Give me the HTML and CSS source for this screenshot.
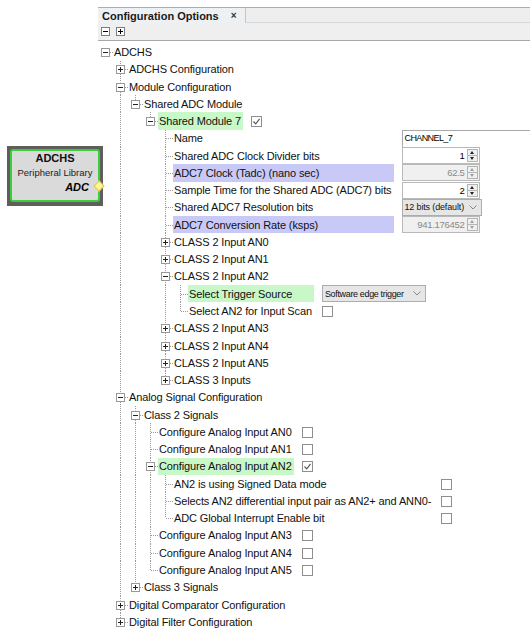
FILE: index.html
```html
<!DOCTYPE html>
<html>
<head>
<meta charset="utf-8">
<title>Configuration Options</title>
<link rel="stylesheet" href="styles.css">
</head>
<body>
<div class="page">
  <div class="canvas">
    <div class="adc-node">
      <div class="adc-card">
        <div class="adc-title">ADCHS</div>
        <div class="adc-sub">Peripheral Library</div>
        <div class="adc-port">ADC</div>
      </div>
      <span class="adc-pin"></span>
    </div>
  </div>

  <section class="panel">
    <div class="tabbar">
      <div class="tab">Configuration Options <span class="tab-x">×</span></div>
    </div>
    <div class="toolbar">
      <span class="tb-btn minus"></span>
      <span class="tb-btn plus"></span>
    </div>

    <div class="tree">
      <div class="grp">
        <div class="row"><span class="gut"><i class="g r minus"></i></span><span class="lbl">ADCHS</span><span class="ed"></span></div>
        <div class="grp">
          <div class="row"><span class="gut"><i class="g"></i><i class="g t plus"></i></span><span class="lbl">ADCHS Configuration</span><span class="ed"></span></div>
          <div class="row"><span class="gut"><i class="g"></i><i class="g t minus"></i></span><span class="lbl">Module Configuration</span><span class="ed"></span></div>
          <div class="grp">
            <div class="row"><span class="gut"><i class="g"></i><i class="g v"></i><i class="g l minus"></i></span><span class="lbl">Shared ADC Module</span><span class="ed"></span></div>
            <div class="grp">
              <div class="row"><span class="gut"><i class="g"></i><i class="g v"></i><i class="g"></i><i class="g l minus"></i></span><span class="lbl hl-green">Shared Module 7</span><span class="ed"><span class="cb on"></span></span></div>
              <div class="grp">
                <div class="row"><span class="gut"><i class="g"></i><i class="g v"></i><i class="g"></i><i class="g"></i><i class="g t"></i></span><span class="lbl">Name</span><span class="ed"><span class="field">CHANNEL_7</span></span></div>
                <div class="row"><span class="gut"><i class="g"></i><i class="g v"></i><i class="g"></i><i class="g"></i><i class="g t"></i></span><span class="lbl">Shared ADC Clock Divider bits</span><span class="ed"><span class="spin"><span class="spin-val">1</span><span class="spin-btns"><i class="up"></i><i class="dn"></i></span></span></span></div>
                <div class="row"><span class="gut"><i class="g"></i><i class="g v"></i><i class="g"></i><i class="g"></i><i class="g t"></i></span><span class="lbl hl-blue">ADC7 Clock (Tadc) (nano sec)</span><span class="ed"><span class="spin off"><span class="spin-val">62.5</span><span class="spin-btns"><i class="up"></i><i class="dn"></i></span></span></span></div>
                <div class="row"><span class="gut"><i class="g"></i><i class="g v"></i><i class="g"></i><i class="g"></i><i class="g t"></i></span><span class="lbl">Sample Time for the Shared ADC (ADC7) bits</span><span class="ed"><span class="spin"><span class="spin-val">2</span><span class="spin-btns"><i class="up"></i><i class="dn"></i></span></span></span></div>
                <div class="row"><span class="gut"><i class="g"></i><i class="g v"></i><i class="g"></i><i class="g"></i><i class="g t"></i></span><span class="lbl">Shared ADC7 Resolution bits</span><span class="ed"><span class="combo res">12 bits (default)<svg class="chev" viewBox="0 0 8 5"><path d="M0.5 0.5 L4 4 L7.5 0.5"/></svg></span></span></div>
                <div class="row"><span class="gut"><i class="g"></i><i class="g v"></i><i class="g"></i><i class="g"></i><i class="g t"></i></span><span class="lbl hl-blue">ADC7 Conversion Rate (ksps)</span><span class="ed"><span class="spin off"><span class="spin-val">941.176452</span><span class="spin-btns"><i class="up"></i><i class="dn"></i></span></span></span></div>
                <div class="row"><span class="gut"><i class="g"></i><i class="g v"></i><i class="g"></i><i class="g"></i><i class="g t plus"></i></span><span class="lbl">CLASS 2 Input AN0</span><span class="ed"></span></div>
                <div class="row"><span class="gut"><i class="g"></i><i class="g v"></i><i class="g"></i><i class="g"></i><i class="g t plus"></i></span><span class="lbl">CLASS 2 Input AN1</span><span class="ed"></span></div>
                <div class="row"><span class="gut"><i class="g"></i><i class="g v"></i><i class="g"></i><i class="g"></i><i class="g t minus"></i></span><span class="lbl">CLASS 2 Input AN2</span><span class="ed"></span></div>
                <div class="grp">
                  <div class="row"><span class="gut"><i class="g"></i><i class="g v"></i><i class="g"></i><i class="g"></i><i class="g v"></i><i class="g t"></i></span><span class="lbl hl-green">Select Trigger Source</span><span class="ed"><span class="combo trig">Software edge trigger<svg class="chev" viewBox="0 0 8 5"><path d="M0.5 0.5 L4 4 L7.5 0.5"/></svg></span></span></div>
                  <div class="row"><span class="gut"><i class="g"></i><i class="g v"></i><i class="g"></i><i class="g"></i><i class="g v"></i><i class="g l"></i></span><span class="lbl">Select AN2 for Input Scan</span><span class="ed"><span class="cb"></span></span></div>
                </div>
                <div class="row"><span class="gut"><i class="g"></i><i class="g v"></i><i class="g"></i><i class="g"></i><i class="g t plus"></i></span><span class="lbl">CLASS 2 Input AN3</span><span class="ed"></span></div>
                <div class="row"><span class="gut"><i class="g"></i><i class="g v"></i><i class="g"></i><i class="g"></i><i class="g t plus"></i></span><span class="lbl">CLASS 2 Input AN4</span><span class="ed"></span></div>
                <div class="row"><span class="gut"><i class="g"></i><i class="g v"></i><i class="g"></i><i class="g"></i><i class="g t plus"></i></span><span class="lbl">CLASS 2 Input AN5</span><span class="ed"></span></div>
                <div class="row"><span class="gut"><i class="g"></i><i class="g v"></i><i class="g"></i><i class="g"></i><i class="g l plus"></i></span><span class="lbl">CLASS 3 Inputs</span><span class="ed"></span></div>
              </div>
            </div>
          </div>
          <div class="row"><span class="gut"><i class="g"></i><i class="g t minus"></i></span><span class="lbl">Analog Signal Configuration</span><span class="ed"></span></div>
          <div class="grp">
            <div class="row"><span class="gut"><i class="g"></i><i class="g v"></i><i class="g t minus"></i></span><span class="lbl">Class 2 Signals</span><span class="ed"></span></div>
            <div class="grp">
              <div class="row"><span class="gut"><i class="g"></i><i class="g v"></i><i class="g v"></i><i class="g t"></i></span><span class="lbl">Configure Analog Input AN0</span><span class="ed"><span class="cb"></span></span></div>
              <div class="row"><span class="gut"><i class="g"></i><i class="g v"></i><i class="g v"></i><i class="g t"></i></span><span class="lbl">Configure Analog Input AN1</span><span class="ed"><span class="cb"></span></span></div>
              <div class="row"><span class="gut"><i class="g"></i><i class="g v"></i><i class="g v"></i><i class="g t minus"></i></span><span class="lbl hl-green">Configure Analog Input AN2</span><span class="ed"><span class="cb on"></span></span></div>
              <div class="grp">
                <div class="row"><span class="gut"><i class="g"></i><i class="g v"></i><i class="g v"></i><i class="g v"></i><i class="g t"></i></span><span class="lbl">AN2 is using Signed Data mode</span><span class="ed"><span class="cb"></span></span></div>
                <div class="row"><span class="gut"><i class="g"></i><i class="g v"></i><i class="g v"></i><i class="g v"></i><i class="g t"></i></span><span class="lbl">Selects AN2 differential input pair as AN2+ and ANN0-</span><span class="ed"><span class="cb"></span></span></div>
                <div class="row"><span class="gut"><i class="g"></i><i class="g v"></i><i class="g v"></i><i class="g v"></i><i class="g l"></i></span><span class="lbl">ADC Global Interrupt Enable bit</span><span class="ed"><span class="cb"></span></span></div>
              </div>
              <div class="row"><span class="gut"><i class="g"></i><i class="g v"></i><i class="g v"></i><i class="g t"></i></span><span class="lbl">Configure Analog Input AN3</span><span class="ed"><span class="cb"></span></span></div>
              <div class="row"><span class="gut"><i class="g"></i><i class="g v"></i><i class="g v"></i><i class="g t"></i></span><span class="lbl">Configure Analog Input AN4</span><span class="ed"><span class="cb"></span></span></div>
              <div class="row"><span class="gut"><i class="g"></i><i class="g v"></i><i class="g v"></i><i class="g l"></i></span><span class="lbl">Configure Analog Input AN5</span><span class="ed"><span class="cb"></span></span></div>
            </div>
            <div class="row"><span class="gut"><i class="g"></i><i class="g v"></i><i class="g l plus"></i></span><span class="lbl">Class 3 Signals</span><span class="ed"></span></div>
          </div>
          <div class="row"><span class="gut"><i class="g"></i><i class="g t plus"></i></span><span class="lbl">Digital Comparator Configuration</span><span class="ed"></span></div>
          <div class="row"><span class="gut"><i class="g"></i><i class="g l plus"></i></span><span class="lbl">Digital Filter Configuration</span><span class="ed"></span></div>
        </div>
      </div>
    </div>
  </section>
</div>
</body>
</html>
```

FILE: styles.css
```css
* { box-sizing: border-box; }
html, body { margin: 0; padding: 0; background: #fff; }
body {
  font-family: "Liberation Sans", Arial, sans-serif;
  font-size: 11px;
  color: #000;
}
.page {
  display: flex;
  width: 530px;
  height: 635px;
  overflow: hidden;
}

/* ---------- diagram canvas with the ADC node ---------- */
.canvas {
  position: relative;
  width: 98px;
  flex: none;
}
.adc-node {
  position: absolute;
  left: 7px;
  top: 146px;
  width: 96px;
  height: 60px;
  background: #5e5e5e;
  padding: 3px 3px 4px 3px;
  z-index: 2;
}
.adc-card {
  position: relative;
  height: 100%;
  border: 2px solid #3ccc3c;
  border-radius: 3px;
  background: #dadada;
  text-align: center;
  display: flex;
  flex-direction: column;
}
.adc-title {
  font-weight: bold;
  font-size: 11px;
  line-height: 13px;
  margin-top: 1px;
  color: #111;
}
.adc-sub {
  font-size: 9.5px;
  line-height: 12px;
  margin-top: 2px;
  color: #222;
}
.adc-port {
  font-weight: bold;
  font-style: italic;
  font-size: 11px;
  line-height: 13px;
  text-align: right;
  padding-right: 9px;
  margin-top: 2px;
}
.adc-pin {
  position: absolute;
  right: 0;
  top: 36px;
  width: 8px;
  height: 8px;
  background: #fff59a;
  border: 1px solid #d8c84a;
  transform: rotate(45deg);
}

/* ---------- panel ---------- */
.panel {
  flex: 1;
  min-width: 0;
  margin-top: 7px;
  display: flex;
  flex-direction: column;
}
.tabbar {
  height: 16px;
  display: flex;
  background: #eeeeee;
  border-top: 1px solid #9fb0c4;
  border-bottom: 1px solid #d3d7dc;
}
.tab {
  display: flex;
  align-items: center;
  padding: 0 8px 0 4px;
  font-weight: bold;
  font-size: 11px;
  color: #1a1a1a;
  background: #eef1f4;
  border-right: 1px solid #c2c6cc;
  margin-bottom: -1px;
}
.tab-x {
  font-size: 10px;
  margin-left: 12px;
  color: #333;
}
.toolbar {
  height: 18px;
  display: flex;
  align-items: center;
  gap: 6px;
  padding-left: 3px;
  background: #efefef;
  border-bottom: 1px solid #a7a7a7;
}
.tb-btn {
  position: relative;
  width: 9px;
  height: 9px;
  border: 1px solid #7d7d7d;
  background: #fff;
}
.tb-btn::before {
  content: "";
  position: absolute;
  left: 1px; top: 3px;
  width: 5px; height: 1px;
  background: #000;
}
.tb-btn.plus::after {
  content: "";
  position: absolute;
  left: 3px; top: 1px;
  width: 1px; height: 5px;
  background: #000;
}

/* ---------- tree ---------- */
.tree {
  --rh: 17.27px;
  padding-top: 2.4px;
}
.grp {
  display: grid;
  grid-template-columns: max-content max-content 1fr;
}
.grp .grp { grid-column: 1 / -1; }
.row { display: contents; }

.gut { display: flex; height: var(--rh); }
.g {
  position: relative;
  width: 15px;
  height: 100%;
  flex: none;
}
/* vertical leg */
.g.v::before, .g.t::before, .g.l::before {
  content: "";
  position: absolute;
  left: 7px;
  top: 0;
  width: 1px;
  height: 100%;
  background: repeating-linear-gradient(to bottom, #9a9a9a 0 1px, transparent 1px 2px);
}
.g.l::before { height: 50%; }
/* horizontal leg */
.g.t::after, .g.l::after, .g.r::after {
  content: "";
  position: absolute;
  left: 8px;
  top: 50%;
  width: 7px;
  height: 1px;
  background: repeating-linear-gradient(to right, #9a9a9a 0 1px, transparent 1px 2px);
}
/* expander boxes */
.g.plus, .g.minus {
  background-repeat: no-repeat;
  background-position: 3px calc(50% + 0.5px);
  background-size: 9px 9px;
}
.g.minus {
  background-image: url("data:image/svg+xml,%3Csvg xmlns='http://www.w3.org/2000/svg' width='9' height='9'%3E%3Crect x='0.5' y='0.5' width='8' height='8' fill='%23fff' stroke='%23999'/%3E%3Cpath d='M2 4.5h5' stroke='%23222'/%3E%3C/svg%3E");
}
.g.plus {
  background-image: url("data:image/svg+xml,%3Csvg xmlns='http://www.w3.org/2000/svg' width='9' height='9'%3E%3Crect x='0.5' y='0.5' width='8' height='8' fill='%23fff' stroke='%23999'/%3E%3Cpath d='M2 4.5h5M4.5 2v5' stroke='%23222'/%3E%3C/svg%3E");
}
.g.plus::after, .g.minus::after { left: 12px; width: 3px; }
.g.t.plus::before, .g.t.minus::before {
  background:
    repeating-linear-gradient(to bottom, #9a9a9a 0 1px, transparent 1px 2px) top / 1px calc(50% - 4px) no-repeat,
    repeating-linear-gradient(to bottom, #9a9a9a 0 1px, transparent 1px 2px) bottom / 1px calc(50% - 5px) no-repeat;
}
.g.l.plus::before, .g.l.minus::before {
  background:
    repeating-linear-gradient(to bottom, #9a9a9a 0 1px, transparent 1px 2px) top / 1px calc(100% - 4px) no-repeat;
}

.lbl {
  height: var(--rh);
  display: flex;
  align-items: center;
  white-space: nowrap;
  padding: 0 2px 0 1px;
  letter-spacing: -0.12px;
  color: #111;
}
.hl-green { background: #c8f7c8; }
.hl-blue { background: #c9c9f7; }

.ed {
  height: var(--rh);
  display: flex;
  align-items: center;
  padding-left: 8px;
  min-width: 0;
}

/* checkbox */
.cb {
  width: 11px;
  height: 11px;
  border: 1px solid #8e8e8e;
  background: #fff;
  flex: none;
  margin-top: 1px;
}
.cb.on {
  background: #fff url("data:image/svg+xml,%3Csvg xmlns='http://www.w3.org/2000/svg' width='9' height='9'%3E%3Cpath d='M1.5 4.5 L3.7 6.8 L7.6 1.8' fill='none' stroke='%23555' stroke-width='1.1'/%3E%3C/svg%3E") center / 9px 9px no-repeat;
}

/* editors */
.field {
  width: 140px;
  height: 17px;
  flex: none;
  border-top: 1px solid #a9a9a9;
  border-left: 1px solid #a9a9a9;
  background: #fff;
  font-size: 9px;
  line-height: 15px;
  padding-left: 2px;
  letter-spacing: -0.6px;
  white-space: nowrap;
}
.spin {
  width: 78px;
  height: 17px;
  flex: none;
  display: flex;
  border: 1px solid #b9b9b9;
  background: #fff;
  font-size: 9.5px;
  letter-spacing: -0.3px;
}
.spin-val {
  flex: 1;
  text-align: right;
  line-height: 15px;
  padding-right: 2px;
  white-space: nowrap;
}
.spin-btns {
  width: 11px;
  display: flex;
  flex-direction: column;
  margin: 1px 1px 1px 0;
}
.spin-btns i {
  flex: 1;
  position: relative;
  background: #f0f0f0;
  border: 1px solid #b4b4b4;
}
.spin-btns i + i { border-top: none; }
.spin-btns i::after {
  content: "";
  position: absolute;
  left: 2px;
  top: 1px;
  border-left: 2.5px solid transparent;
  border-right: 2.5px solid transparent;
}
.spin-btns .up::after { border-bottom: 3px solid #222; }
.spin-btns .dn::after { border-top: 3px solid #222; }
.spin.off { background: #f0f0f0; color: #8a8a8a; }
.spin.off .spin-btns .up::after { border-bottom-color: #a0a0a0; }
.spin.off .spin-btns .dn::after { border-top-color: #a0a0a0; }

.combo {
  height: 17px;
  flex: none;
  display: flex;
  align-items: center;
  justify-content: space-between;
  background: #e6e6e6;
  border: 1px solid #adadad;
  padding: 0 4px 0 2px;
  font-size: 9px;
  letter-spacing: -0.15px;
  color: #111;
  white-space: nowrap;
  overflow: hidden;
}
.combo.res { width: 80px; }
.combo.trig { width: 104px; letter-spacing: -0.35px; }
.chev {
  width: 8px;
  height: 5px;
  flex: none;
  fill: none;
  stroke: #888;
  stroke-width: 1;
  margin-left: 4px;
}
```
